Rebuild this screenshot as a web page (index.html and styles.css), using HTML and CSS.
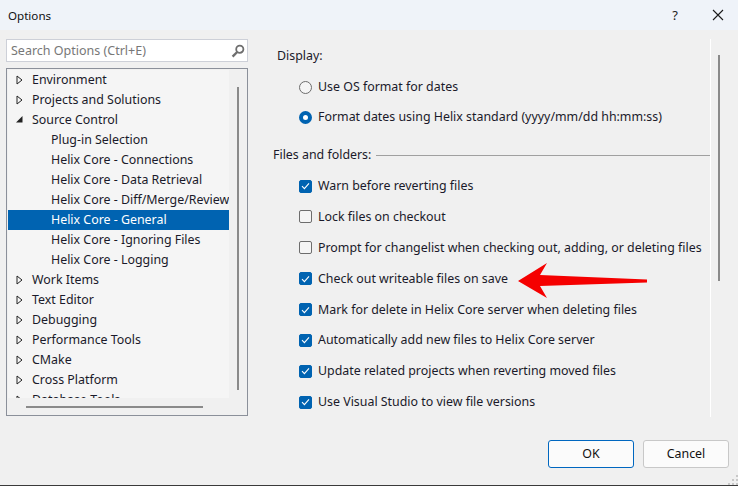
FILE: index.html
```html
<!DOCTYPE html>
<html lang="en">
<head>
<meta charset="utf-8">
<title>Options</title>
<link rel="stylesheet" href="styles.css">
</head>
<body>
<div class="window">
  <header class="titlebar">
    <span class="title">Options</span>
    <span class="help">?</span>
    <svg class="close" width="12" height="12" viewBox="0 0 12 12"><path d="M1 1L11 11M11 1L1 11" stroke="#1a1a1a" stroke-width="1.1" fill="none"/></svg>
  </header>
  <main class="content">
    <aside class="left">
      <div class="search">
        <span class="search-text">Search Options (Ctrl+E)</span>
        <svg class="search-icon" width="14" height="14" viewBox="0 0 14 14"><circle cx="8.8" cy="5.2" r="3.6" fill="none" stroke="#6e6e6e" stroke-width="1.8"/><path d="M6.2 8L1.6 12.6" stroke="#6e6e6e" stroke-width="2.4" fill="none"/></svg>
      </div>
      <div class="treebox">
        <div class="tree-row-wrap">
          <div class="tree">
            <div class="row"><svg class="tri" width="7" height="10" viewBox="0 0 7 10"><path d="M1 1L6 5L1 9Z" fill="none" stroke="#222" stroke-width="1"/></svg>Environment</div>
            <div class="row"><svg class="tri" width="7" height="10" viewBox="0 0 7 10"><path d="M1 1L6 5L1 9Z" fill="none" stroke="#222" stroke-width="1"/></svg>Projects and Solutions</div>
            <div class="row"><svg class="tri" width="7" height="10" viewBox="0 0 7 10"><path d="M0 7.500L6.500 7.500L6.500 1Z" fill="#222"/></svg>Source Control</div>
            <div class="row child">Plug-in Selection</div>
            <div class="row child">Helix Core - Connections</div>
            <div class="row child">Helix Core - Data Retrieval</div>
            <div class="row child">Helix Core - Diff/Merge/Review</div>
            <div class="row child selected">Helix Core - General</div>
            <div class="row child">Helix Core - Ignoring Files</div>
            <div class="row child">Helix Core - Logging</div>
            <div class="row"><svg class="tri" width="7" height="10" viewBox="0 0 7 10"><path d="M1 1L6 5L1 9Z" fill="none" stroke="#222" stroke-width="1"/></svg>Work Items</div>
            <div class="row"><svg class="tri" width="7" height="10" viewBox="0 0 7 10"><path d="M1 1L6 5L1 9Z" fill="none" stroke="#222" stroke-width="1"/></svg>Text Editor</div>
            <div class="row"><svg class="tri" width="7" height="10" viewBox="0 0 7 10"><path d="M1 1L6 5L1 9Z" fill="none" stroke="#222" stroke-width="1"/></svg>Debugging</div>
            <div class="row"><svg class="tri" width="7" height="10" viewBox="0 0 7 10"><path d="M1 1L6 5L1 9Z" fill="none" stroke="#222" stroke-width="1"/></svg>Performance Tools</div>
            <div class="row"><svg class="tri" width="7" height="10" viewBox="0 0 7 10"><path d="M1 1L6 5L1 9Z" fill="none" stroke="#222" stroke-width="1"/></svg>CMake</div>
            <div class="row"><svg class="tri" width="7" height="10" viewBox="0 0 7 10"><path d="M1 1L6 5L1 9Z" fill="none" stroke="#222" stroke-width="1"/></svg>Cross Platform</div>
            <div class="row"><svg class="tri" width="7" height="10" viewBox="0 0 7 10"><path d="M1 1L6 5L1 9Z" fill="none" stroke="#222" stroke-width="1"/></svg>Database Tools</div>
          </div>
          <div class="vbar"><div class="vthumb"></div></div>
        </div>
        <div class="hbar"><div class="hthumb"></div></div>
      </div>
    </aside>
    <section class="right">
      <div class="pane">
        <div class="label">Display:</div>
        <div class="opt first"><span class="radio"></span>Use OS format for dates</div>
        <div class="opt second"><span class="radio on"></span>Format dates using Helix standard (yyyy/mm/dd hh:mm:ss)</div>
        <div class="group"><span>Files and folders:</span><span class="rule"></span></div>
        <div class="opt chk-first"><span class="check on"><svg width="9" height="8" viewBox="0 0 9 8"><path d="M1 4.200L3.400 6.600L8 1.400" fill="none" stroke="#fff" stroke-width="1.100"/></svg></span>Warn before reverting files</div>
        <div class="opt"><span class="check"></span>Lock files on checkout</div>
        <div class="opt"><span class="check"></span>Prompt for changelist when checking out, adding, or deleting files</div>
        <div class="opt"><span class="check on"><svg width="9" height="8" viewBox="0 0 9 8"><path d="M1 4.200L3.400 6.600L8 1.400" fill="none" stroke="#fff" stroke-width="1.100"/></svg></span>Check out writeable files on save</div>
        <div class="opt"><span class="check on"><svg width="9" height="8" viewBox="0 0 9 8"><path d="M1 4.200L3.400 6.600L8 1.400" fill="none" stroke="#fff" stroke-width="1.100"/></svg></span>Mark for delete in Helix Core server when deleting files</div>
        <div class="opt"><span class="check on"><svg width="9" height="8" viewBox="0 0 9 8"><path d="M1 4.200L3.400 6.600L8 1.400" fill="none" stroke="#fff" stroke-width="1.100"/></svg></span>Automatically add new files to Helix Core server</div>
        <div class="opt"><span class="check on"><svg width="9" height="8" viewBox="0 0 9 8"><path d="M1 4.200L3.400 6.600L8 1.400" fill="none" stroke="#fff" stroke-width="1.100"/></svg></span>Update related projects when reverting moved files</div>
        <div class="opt"><span class="check on"><svg width="9" height="8" viewBox="0 0 9 8"><path d="M1 4.200L3.400 6.600L8 1.400" fill="none" stroke="#fff" stroke-width="1.100"/></svg></span>Use Visual Studio to view file versions</div>
      </div>
      <div class="rbar"><div class="rthumb"></div></div>
    </section>
  </main>
  <footer class="footer">
    <button class="btn primary">OK</button>
    <button class="btn">Cancel</button>
  </footer>
  <svg class="arrow" width="130" height="36" viewBox="0 0 130 36"><path d="M0 18L29 0L22 12L129 16.500L129 19.500L22 23L29 35Z" fill="#f50000"/></svg>
  <svg class="grip" width="10" height="10" viewBox="0 0 10 10"><path d="M8 0h2v2H8zM4 4h2v2H4zM8 4h2v2H8zM0 8h2v2H0zM4 8h2v2H4zM8 8h2v2H8z" fill="#c8c8c8"/></svg>
</div>
</body>
</html>
```
FILE: styles.css
```css
* { box-sizing: border-box; }
html, body { margin: 0; padding: 0; background: #f0f0f0; }
body { font-family: "Noto Sans", "Open Sans", sans-serif; font-size: 12.4px; color: #1a1a2a; overflow: hidden; }
.window { position: relative; width: 738px; height: 486px; background: #f0f0f0; border-bottom: 1px solid #3a3a3a; display: flex; flex-direction: column; overflow: hidden; }
.titlebar { height: 30px; flex: none; background: #eff3f9; display: flex; align-items: center; padding: 0 0 0 8px; }
.title { flex: 1; font-size: 11.6px; color: #111; }
.help { font-size: 13px; color: #222; margin-right: 34px; }
.close { margin-right: 14px; }
.content { flex: none; height: 387px; display: flex; padding: 9px 0 0 6px; }
.left { width: 242px; flex: none; display: flex; flex-direction: column; gap: 6px; }
.search { height: 23px; background: #fff; border: 1px solid #cdd0d8; display: flex; align-items: center; justify-content: space-between; padding: 0 2px 0 4px; flex: none; }
.search-text { color: #777; font-size: 12.5px; }
.treebox { height: 348px; border: 1px solid #8b909a; background: #f0f0f0; padding: 1px 0 0 1px; display: flex; flex-direction: column; flex: none; }
.tree-row-wrap { height: 328px; display: flex; flex: none; }
.tree { width: 221px; height: 328px; overflow: hidden; background: #f5f5f5; flex: none; }
.row { height: 20px; display: flex; align-items: center; padding-left: 8px; white-space: nowrap; line-height: 20px; }
.tri { margin-right: 9px; flex: none; }
.child { padding-left: 43px; }
.selected { background: #0063b1; color: #fff; }
.vbar { flex: 1; padding: 17px 0 0 8px; }
.vthumb { width: 2px; height: 303px; background: #8a8a8a; }
.hbar { flex: 1; padding: 8px 0 0 18px; }
.hthumb { width: 177px; height: 2px; background: #8a8a8a; }
.right { flex: none; width: 471px; height: 378px; margin-left: 19px; display: flex; }
.pane { width: 444px; height: 378px; overflow: hidden; border-right: 1px solid #fff; flex: none; }
.label { height: 16px; line-height: 16px; margin: 9px 0 0 10px; }
.opt { height: 20px; display: flex; align-items: center; margin: 10.9px 0 0 32px; white-space: nowrap; line-height: 20px; }
.first { margin-top: 13px; }
.second { margin-top: 10px; }
.radio { width: 13px; height: 13px; border-radius: 50%; border: 1px solid #6d6d6d; background: #f5f5f5; margin-right: 6px; flex: none; }
.radio.on { border: 4px solid #0063b1; background: #fff; }
.group { display: flex; align-items: center; gap: 5px; height: 16px; line-height: 16px; margin: 20px 0 0 6px; }
.rule { flex: 1; height: 1px; background: #a0a0a0; }
.chk-first { margin-top: 13px; }
.check { width: 13px; height: 13px; border-radius: 2px; border: 1px solid #6d6d6d; background: #f5f5f5; margin-right: 6px; flex: none; display: flex; align-items: center; justify-content: center; }
.check.on { background: #0063b1; border-color: #0063b1; }
.rbar { flex: 1; padding: 16px 0 0 7px; }
.rthumb { width: 2px; height: 226px; background: #8a8a8a; }
.footer { flex: 1; display: flex; justify-content: flex-end; gap: 9px; padding: 23px 9px 0 0; }
.btn { width: 86px; height: 28px; font: inherit; color: #111; background: #fbfbfb; border: 1px solid #c8c8c8; border-radius: 3px; padding: 0 0 1px; }
.btn.primary { border-color: #0067c0; }
.arrow { position: absolute; left: 518px; top: 263px; }
.grip { position: absolute; right: 0; bottom: 0; }
```
